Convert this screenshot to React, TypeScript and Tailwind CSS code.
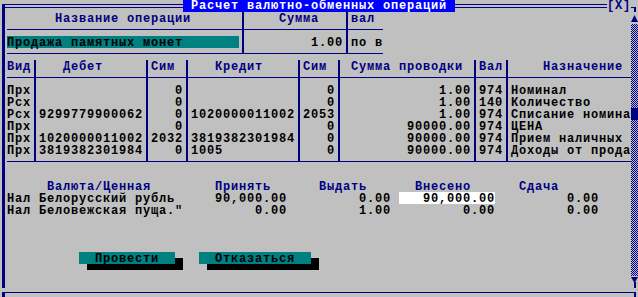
import React from 'react';

// text-mode screen: 8px columns, 12px rows
const NAVY = 'bg-[#000080]';

type JKind = 'v' | 'x' | 'b';

function J({ kind }: { kind: JKind }) {
  const side = kind === 'v' ? null : <div className={`h-px ${NAVY}`} />;
  return (
    <div className="flex w-[8px] h-[12px] shrink-0">
      <div className="w-[3px] pt-[5px]">{side}</div>
      <div className={kind === 'b' ? 'w-[2px] h-[6px] bg-[#000080]' : 'w-[2px] h-[12px] bg-[#000080]'} />
      <div className="w-[3px] pt-[5px]">{side}</div>
    </div>
  );
}

function HLine({ w }: { w: string }) {
  return (
    <div className={`${w} h-[12px] pt-[5px] shrink-0`}>
      <div className={`h-px ${NAVY}`} />
    </div>
  );
}

interface Col {
  w: string;
  right?: boolean;
}

const topCols: Col[] = [{ w: 'w-[232px]' }, { w: 'w-[96px]', right: true }, { w: 'w-[32px]' }];

const cols: Col[] = [
  { w: 'w-[24px]' },
  { w: 'w-[104px]' },
  { w: 'w-[32px]', right: true },
  { w: 'w-[104px]' },
  { w: 'w-[32px]', right: true },
  { w: 'w-[128px]', right: true },
  { w: 'w-[24px]' },
  { w: 'w-[120px]' },
];

const header = ['Вид', '   Дебет', 'Сим', '   Кредит', 'Сим', ' Сумма проводки', 'Вал', '    Назначение'];

const entries = [
  ['Прх', '', '0', '', '0', '1.00', '974', 'Номинал'],
  ['Рсх', '', '0', '', '0', '1.00', '140', 'Количество'],
  ['Рсх', '9299779900062', '0', '1020000011002', '2053', '1.00', '974', 'Списание номина'],
  ['Прх', '', '0', '', '0', '90000.00', '974', 'ЦЕНА'],
  ['Прх', '1020000011002', '2032', '3819382301984', '0', '90000.00', '974', 'Прием наличных'],
  ['Прх', '3819382301984', '0', '1005', '0', '90000.00', '974', 'Доходы от прода'],
];

function TableRow({ spec, cells, head }: { spec: Col[]; cells: React.ReactNode[]; head?: boolean }) {
  return (
    <div className="flex h-[12px]">
      {spec.map((c, i) => (
        <React.Fragment key={i}>
          <div
            className={`${c.w} shrink-0 pt-px whitespace-pre ${c.right && !head ? 'text-right' : ''} ${
              head ? 'text-[#000080]' : ''
            }`}
          >
            {cells[i]}
          </div>
          {i < spec.length - 1 && <J kind="v" />}
        </React.Fragment>
      ))}
    </div>
  );
}

function LineRow({ spec, kind }: { spec: Col[]; kind: JKind }) {
  return (
    <div className="flex h-[12px]">
      {spec.map((c, i) => (
        <React.Fragment key={i}>
          <HLine w={c.w} />
          {i < spec.length - 1 && <J kind={kind} />}
        </React.Fragment>
      ))}
    </div>
  );
}

const Empty = () => <div className="h-[12px]" />;

function Amounts({ name, take, give, paid, change, box }: {
  name: string; take: string; give: string; paid: string; change: string; box?: boolean;
}) {
  return (
    <div className="flex h-[12px] whitespace-pre">
      <div className="w-[176px] shrink-0 pt-px">{name}</div>
      <div className="w-[104px] shrink-0 pt-px text-right">{take}</div>
      <div className="w-[104px] shrink-0 pt-px text-right">{give}</div>
      <div className="w-[8px] shrink-0" />
      <div className={`w-[96px] shrink-0 pt-px text-right ${box ? 'bg-white' : ''}`}>{paid}</div>
      <div className="w-[104px] shrink-0 pt-px text-right">{change}</div>
    </div>
  );
}

const checker =
  'bg-[repeating-conic-gradient(#000080_0_25%,#c0c0c0_0_50%)] bg-[length:2px_2px]';

function Scrollbar() {
  return (
    <div className="w-[7px] shrink-0 flex flex-col">
      <svg width="7" height="12" className="block">
        <polygon points="3.5,3 0,10 7,10" fill="#000080" />
      </svg>
      <div className={`h-[84px] ${checker}`} />
      <div className="h-[12px] bg-[#000080]" />
      <div className={`h-[156px] ${checker}`} />
      <svg width="7" height="12" className="block">
        <polygon points="0,1 7,1 3.5,7" fill="#000080" />
        <rect x="3" y="6" width="2" height="6" fill="#000080" />
      </svg>
    </div>
  );
}

export default function App() {
  return (
    <div className="w-[638px] h-[297px] overflow-hidden bg-[#c0c0c0] flex flex-col font-['Liberation_Mono',monospace] font-bold text-[12px] leading-[12px] tracking-[0.8px] text-black">
      {/* title row */}
      <div className="flex h-[12px] shrink-0">
        <div className="w-[183px] pl-[2px] pt-[4px]">
          <div className="h-[8px] border-l-[3px] border-t border-[#000080]">
            <div className="mt-[2px] h-px bg-[#000080]" />
          </div>
        </div>
        <div className="w-[272px] bg-[#0000ff] text-white whitespace-pre"> Расчет валютно-обменных операций </div>
        <div className="w-[152px] pt-[4px]">
          <div className="h-[4px] border-y border-[#000080]" />
        </div>
        <div className="w-[24px] text-[#000080]">[X]</div>
        <svg width="7" height="12" className="block">
          <rect x="0" y="7" width="5" height="1" fill="#000080" />
          <rect x="3" y="7" width="2" height="5" fill="#000080" />
        </svg>
      </div>

      <div className="flex h-[276px] shrink-0">
        <div className="w-[7px] shrink-0 pl-[2px]">
          <div className="w-[3px] h-full bg-[#000080]" />
        </div>

        <div className="w-[624px] shrink-0 flex flex-col">
          <TableRow spec={topCols} head cells={['      Название операции', '    Сумма', 'вал']} />
          <LineRow spec={topCols} kind="x" />
          <div className="flex h-[12px]">
            <div className="w-[232px] shrink-0 pt-px bg-[#008080] whitespace-pre">Продажа памятных монет</div>
            <J kind="v" />
            <div className="w-[96px] shrink-0 pt-px text-right">1.00</div>
            <J kind="v" />
            <div className="w-[32px] shrink-0 pt-px whitespace-pre">по в</div>
          </div>
          <LineRow spec={topCols} kind="b" />

          <TableRow spec={cols} head cells={header} />
          <LineRow spec={cols} kind="x" />
          {entries.map((e, i) => (
            <TableRow key={i} spec={cols} cells={e} />
          ))}
          <LineRow spec={cols} kind="b" />
          <Empty />

          <div className="flex h-[12px] whitespace-pre text-[#000080]">
            <div className="w-[176px] shrink-0 pt-px">     Валюта/Ценная</div>
            <div className="w-[104px] shrink-0 pt-px">    Принять</div>
            <div className="w-[104px] shrink-0 pt-px">    Выдать</div>
            <div className="w-[104px] shrink-0 pt-px">   Внесено</div>
            <div className="w-[104px] shrink-0 pt-px">   Сдача</div>
          </div>
          <Amounts name="Нал Белорусский рубль" take="90,000.00" give="0.00" paid="90,000.00" change="0.00" box />
          <Amounts name={'Нал Беловежская пуща."'} take="0.00" give="1.00" paid="0.00" change="0.00" />
          <Empty />
          <Empty />
          <Empty />

          <div className="flex h-[12px] whitespace-pre">
            <div className="w-[72px] shrink-0" />
            <div className="w-[96px] shrink-0 pt-px bg-[#008080]">  Провести  </div>
            <div className="w-[8px] shrink-0 pt-[6px]">
              <div className="h-[6px] bg-black" />
            </div>
            <div className="w-[16px] shrink-0" />
            <div className="w-[112px] shrink-0 pt-px bg-[#008080]">  Отказаться  </div>
            <div className="w-[8px] shrink-0 pt-[6px]">
              <div className="h-[6px] bg-black" />
            </div>
          </div>
          <div className="flex h-[12px]">
            <div className="w-[80px] shrink-0" />
            <div className="w-[96px] h-[6px] shrink-0 bg-black" />
            <div className="w-[24px] shrink-0" />
            <div className="w-[112px] h-[6px] shrink-0 bg-black" />
          </div>
          <Empty />
        </div>

        <Scrollbar />
      </div>

      {/* bottom frame */}
      <div className="h-[9px] shrink-0 pl-[2px]">
        <div className="w-[634px] h-[7px] border-l-[3px] border-r-2 border-b border-[#000080]">
          <div className="mt-[4px] h-px bg-[#000080]" />
        </div>
      </div>
    </div>
  );
}
